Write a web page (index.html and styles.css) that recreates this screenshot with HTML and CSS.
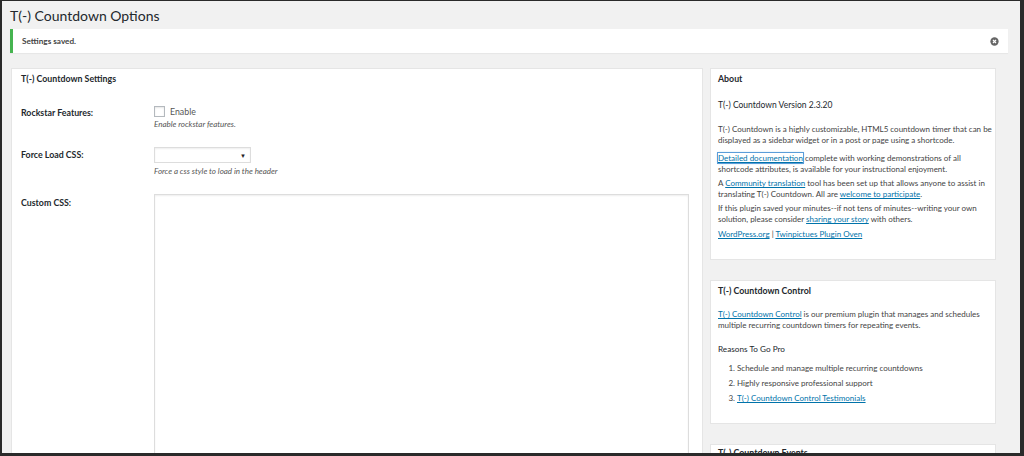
FILE: index.html
```html
<!DOCTYPE html>
<html>
<head>
<meta charset="utf-8">
<link rel="stylesheet" href="styles.css">
</head>
<body>
<div class="screen">
  <h1 class="page-title">T(-) Countdown Options</h1>
  <div class="notice">
    <p class="notice-text">Settings saved.</p>
    <svg class="dismiss" width="9" height="9" viewBox="0 0 10 10"><circle cx="5" cy="5" r="4.6" fill="#666"/><path d="M3.3 3.3 L6.7 6.7 M6.7 3.3 L3.3 6.7" stroke="#fff" stroke-width="1.3"/></svg>
  </div>
  <div class="columns">
    <div class="main-panel">
      <h2 class="panel-title">T(-) Countdown Settings</h2>
      <div class="row row-first">
        <div class="label">Rockstar Features:</div>
        <div class="field">
          <div class="check-line"><span class="checkbox"></span><span class="check-label">Enable</span></div>
          <div class="desc">Enable rockstar features.</div>
        </div>
      </div>
      <div class="row">
        <div class="label label-select">Force Load CSS:</div>
        <div class="field">
          <div class="select"><span class="arrow">▼</span></div>
          <div class="desc desc-select">Force a css style to load in the header</div>
        </div>
      </div>
      <div class="row">
        <div class="label label-textarea">Custom CSS:</div>
        <div class="field">
          <div class="textarea"></div>
        </div>
      </div>
    </div>
    <div class="sidebar">
      <div class="side-box about">
        <h3 class="box-title">About</h3>
        <p class="version">T(-) Countdown Version 2.3.20</p>
        <p class="txt p1">T(-) Countdown is a highly customizable, HTML5 countdown timer that can be<br>displayed as a sidebar widget or in a post or page using a shortcode.</p>
        <p class="txt p2"><a class="focused">Detailed documentation</a> complete with working demonstrations of all<br>shortcode attributes, is available for your instructional enjoyment.</p>
        <p class="txt p3">A <a>Community translation</a> tool has been set up that allows anyone to assist in<br>translating T(-) Countdown. All are <a>welcome to participate</a>.</p>
        <p class="txt p4">If this plugin saved your minutes--if not tens of minutes--writing your own<br>solution, please consider <a>sharing your story</a> with others.</p>
        <p class="txt p5"><a>WordPress.org</a> | <a>Twinpictues Plugin Oven</a></p>
      </div>
      <div class="side-box control">
        <h3 class="box-title">T(-) Countdown Control</h3>
        <p class="txt c1"><a>T(-) Countdown Control</a> is our premium plugin that manages and schedules<br>multiple recurring countdown timers for repeating events.</p>
        <p class="reasons">Reasons To Go Pro</p>
        <ol class="pro-list">
          <li>Schedule and manage multiple recurring countdowns</li>
          <li>Highly responsive professional support</li>
          <li><a>T(-) Countdown Control Testimonials</a></li>
        </ol>
      </div>
      <div class="side-box events">
        <h3 class="box-title">T(-) Countdown Events</h3>
      </div>
    </div>
  </div>
</div>
</body>
</html>
```

FILE: styles.css
```css
html, body {
  margin: 0;
  padding: 0;
}
body {
  font-family: "Lato", "Liberation Sans", sans-serif;
  color: #444;
}
.screen {
  width: 1024px;
  height: 456px;
  box-sizing: border-box;
  background: #f1f1f1;
  border-style: solid;
  border-color: #2a2a2a;
  border-width: 1px 4px 3px 2px;
  overflow: hidden;
  padding-left: 8px;
  padding-right: 12px;
}
.page-title {
  margin: 5px 0 0 0;
  font-size: 14px;
  line-height: 20px;
  font-weight: 400;
  color: #23282d;
}
.notice {
  margin-top: 3px;
  height: 24px;
  background: #fff;
  border-left: 3px solid #46b450;
  display: flex;
  align-items: center;
  justify-content: space-between;
  padding: 0 9px 0 9px;
  box-shadow: 0 1px 1px rgba(0,0,0,0.04);
}
.notice-text {
  margin: 0;
  font-size: 8.2px;
  font-weight: 700;
  color: #444;
}
.dismiss {
  display: block;
}
.columns {
  display: flex;
  gap: 7px;
  margin-top: 15px;
  margin-left: 1px;
}
.main-panel {
  width: 692px;
  height: 400px;
  box-sizing: border-box;
  background: #fff;
  border: 1px solid #e5e5e5;
  padding: 4px 9px 0 9px;
}
.panel-title, .box-title {
  margin: 0;
  font-size: 8.8px;
  line-height: 12px;
  font-weight: 700;
  color: #23282d;
}
.row {
  display: grid;
  grid-template-columns: 133px 1fr;
  margin-top: 17px;
}
.row-first {
  margin-top: 21px;
}
.label {
  font-size: 8.8px;
  line-height: 12px;
  font-weight: 700;
  color: #23282d;
  padding-top: 1px;
}
.label-select { padding-top: 2px; }
.label-textarea { padding-top: 3px; }
.check-line {
  display: flex;
  align-items: center;
  height: 11px;
}
.checkbox {
  width: 9px;
  height: 9px;
  border: 1px solid #b4b9be;
  background: #fff;
  box-shadow: inset 0 1px 2px rgba(0,0,0,0.1);
}
.check-label {
  margin-left: 5px;
  font-size: 8.8px;
  color: #555;
}
.desc {
  font-size: 8px;
  line-height: 11px;
  font-style: italic;
  color: #555;
  margin-top: 2px;
}
.desc-select { margin-top: 3px; }
.select {
  width: 91px;
  height: 14px;
  border: 1px solid #ddd;
  box-shadow: inset 0 1px 2px rgba(0,0,0,0.07);
  display: flex;
  align-items: center;
  justify-content: flex-end;
  padding-right: 4px;
  box-sizing: content-box;
}
.arrow {
  font-size: 6px;
  color: #222;
}
.textarea {
  width: 533px;
  height: 300px;
  border: 1px solid #ddd;
  box-shadow: inset 0 1px 2px rgba(0,0,0,0.07);
}
.sidebar {
  width: 286px;
  display: flex;
  flex-direction: column;
  gap: 20px;
}
.side-box {
  background: #fff;
  border: 1px solid #e5e5e5;
  padding: 4px 8px 0 7px;
  box-sizing: border-box;
}
.about { height: 192px; }
.control { height: 144px; }
.events { height: 40px; padding-top: 2px; }
.version {
  margin: 14px 0 0 0;
  font-size: 8.5px;
  line-height: 12px;
  font-weight: 400;
  color: #23282d;
}
.txt {
  margin: 0;
  font-size: 8px;
  line-height: 11px;
  color: #444;
  white-space: nowrap;
}
.p1 { margin-top: 13px; }
.p2 { margin-top: 7px; }
.p3 { margin-top: 3px; }
.p4 { margin-top: 3px; }
.p5 { margin-top: 4px; }
a {
  color: #0073aa;
  text-decoration: underline;
}
.focused {
  outline: 1px solid #5b9dd9;
  box-shadow: 0 0 2px rgba(30,140,190,0.8);
}
.c1 { margin-top: 12px; }
.reasons {
  margin: 12px 0 0 0;
  font-size: 8.2px;
  line-height: 12px;
  font-weight: 400;
  color: #23282d;
}
.pro-list {
  margin: 8px 0 0 0;
  padding-left: 19px;
  font-size: 8px;
  line-height: 11px;
  color: #444;
}
.pro-list li {
  margin-bottom: 4px;
}
```
